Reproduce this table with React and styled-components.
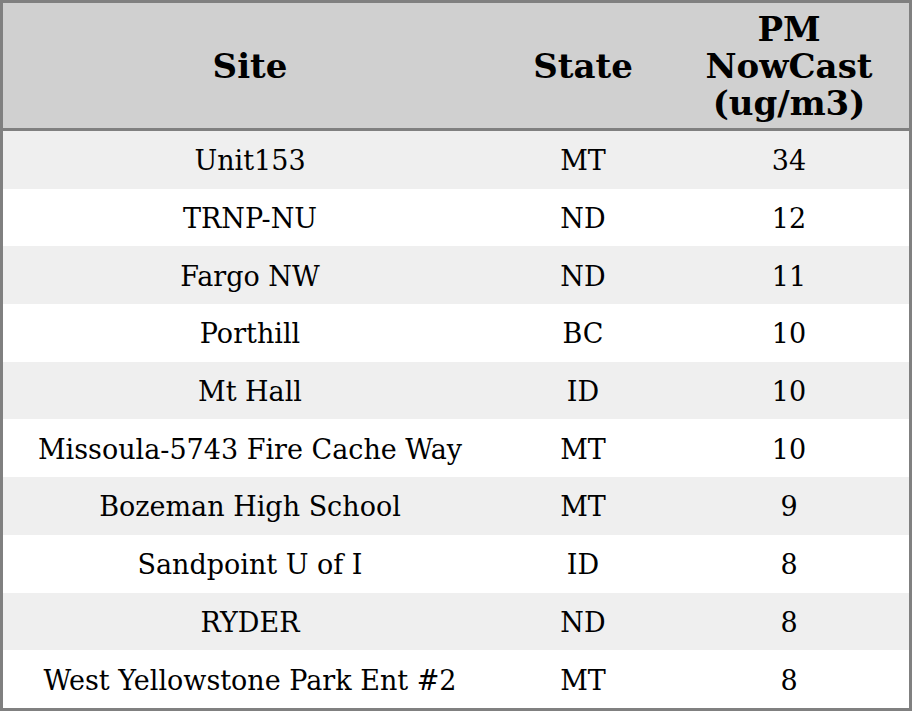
import React from 'react'
import styled, { createGlobalStyle } from 'styled-components'

const GlobalStyle = createGlobalStyle`
  html, body {
    margin: 0;
    padding: 0;
    background: #ffffff;
  }
`

const Table = styled.table`
  width: 912px;
  height: 711px;
  border-collapse: separate;
  border-spacing: 0;
  border: 3px solid #808080;
  box-sizing: border-box;
  table-layout: fixed;
  font-family: "DejaVu Serif", serif;
  color: #000;
`

const HeadCell = styled.th`
  box-sizing: border-box;
  width: ${ p => p.$width }px;
  height: 128px;
  padding: 2px 4px 0;
  background-color: #d0d0d0;
  border-bottom: 3px solid #808080;
  font-size: 34px;
  font-weight: bold;
  line-height: 37px;
  text-align: center;
  vertical-align: middle;
`

const Row = styled.tr`
  height: 57.7px;
  background-color: ${ p => (p.$odd ? '#efefef' : '#ffffff') };
`

const Cell = styled.td`
  padding: 2px 4px 0;
  font-size: 27px;
  text-align: center;
  vertical-align: middle;
  white-space: nowrap;
`

const rows = [
  ['Unit153', 'MT', 34],
  ['TRNP-NU', 'ND', 12],
  ['Fargo NW', 'ND', 11],
  ['Porthill', 'BC', 10],
  ['Mt Hall', 'ID', 10],
  ['Missoula-5743 Fire Cache Way', 'MT', 10],
  ['Bozeman High School', 'MT', 9],
  ['Sandpoint U of I', 'ID', 8],
  ['RYDER', 'ND', 8],
  ['West Yellowstone Park Ent #2', 'MT', 8],
]

const App = () => {
  return (
    <>
      <GlobalStyle />
      <Table>
        <thead>
          <tr>
            <HeadCell $width={ 494 }>Site</HeadCell>
            <HeadCell $width={ 172 }>State</HeadCell>
            <HeadCell $width={ 240 }>PM<br />NowCast<br />(ug/m3)</HeadCell>
          </tr>
        </thead>
        <tbody>
          { rows.map(([site, state, value], i) => (
            <Row key={ site } $odd={ i % 2 === 0 }>
              <Cell>{ site }</Cell>
              <Cell>{ state }</Cell>
              <Cell>{ value }</Cell>
            </Row>
          )) }
        </tbody>
      </Table>
    </>
  )
}

export default App
